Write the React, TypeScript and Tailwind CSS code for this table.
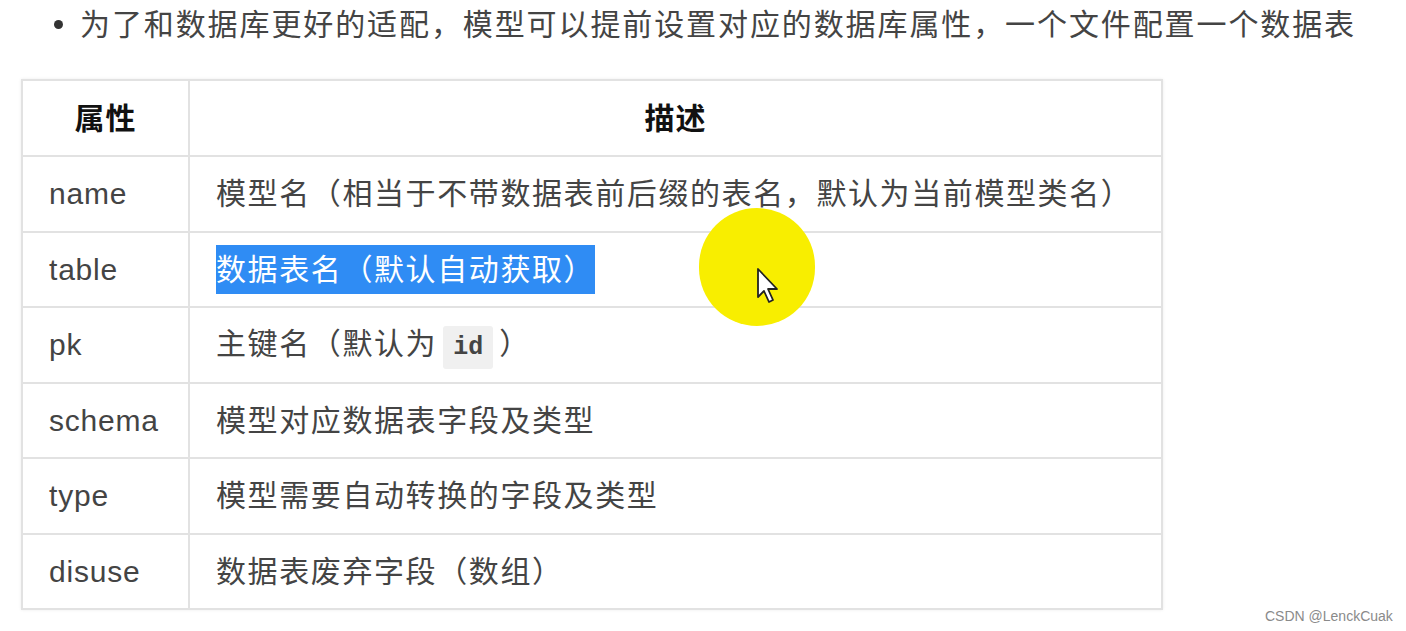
const rows: { key: string; desc: React.ReactNode }[] = [
  { key: "name", desc: "模型名（相当于不带数据表前后缀的表名，默认为当前模型类名）" },
  {
    key: "table",
    desc: (
      <span className="bg-[#2f8cf4] py-[8px] text-white">数据表名（默认自动获取）</span>
    ),
  },
  {
    key: "pk",
    desc: (
      <>
        主键名（默认为
        <code className="mx-[6px] inline-block rounded-[3px] bg-[#f0f0f0] px-[10px] py-[3px] font-['Liberation_Mono',monospace] text-[25px] font-bold tracking-normal text-[#444]">
          id
        </code>
        ）
      </>
    ),
  },
  { key: "schema", desc: "模型对应数据表字段及类型" },
  { key: "type", desc: "模型需要自动转换的字段及类型" },
  { key: "disuse", desc: "数据表废弃字段（数组）" },
];

export default function App() {
  return (
    <div className="relative h-[631px] w-[1406px] overflow-hidden bg-white font-['Liberation_Sans','Noto_Sans_CJK_SC',sans-serif] text-[#3a3a3a]">
      {/* bullet line */}
      <div className="flex h-[46px] items-center pl-[54px] pt-[2px]">
        <span className="mr-[17px] h-[9px] w-[9px] rounded-full bg-[#333]" />
        <span className="text-[30px] tracking-[1.9px] text-[#444]">
          为了和数据库更好的适配，模型可以提前设置对应的数据库属性，一个文件配置一个数据表
        </span>
      </div>

      <div className="pl-[21px] pt-[33px]">
        <table className="w-[1142px] border-collapse border-2 border-[#e2e2e2] shadow-[0_0_3px_rgba(0,0,0,0.08)]">
          <thead>
            <tr className="h-[76px]">
              <th className="w-[167px] border-2 border-[#e2e2e2] text-center text-[30px] font-bold tracking-[1px] text-[#111]">
                属性
              </th>
              <th className="border-2 border-[#e2e2e2] text-center text-[30px] font-bold tracking-[1px] text-[#111]">
                描述
              </th>
            </tr>
          </thead>
          <tbody>
            {rows.map((r) => (
              <tr key={r.key} className="h-[75.5px]">
                <td className="border-2 border-[#e2e2e2] pl-[26px] text-[30px] tracking-[0.8px] text-[#444]">
                  {r.key}
                </td>
                <td className="border-2 border-[#e2e2e2] pl-[26px] text-[30px] tracking-[1.6px] text-[#444]">
                  {r.desc}
                </td>
              </tr>
            ))}
          </tbody>
        </table>
      </div>

      {/* cursor highlight */}
      <div className="absolute left-[699px] top-[208px] h-[118px] w-[116px] rounded-full bg-[#f8ee00]" />
      <svg className="absolute left-[756px] top-[267px]" width="26" height="40" viewBox="0 0 26 40">
        <path
          d="M2 2 L2 30 L8 24 L13 35 L17 33 L12 22 L21 22 Z"
          fill="white"
          stroke="#222"
          strokeWidth="1.8"
          strokeLinejoin="round"
        />
      </svg>

      <div className="absolute left-[1265px] top-[606px] text-[14px] text-[#8a8a8a]">CSDN @LenckCuak</div>
    </div>
  );
}
